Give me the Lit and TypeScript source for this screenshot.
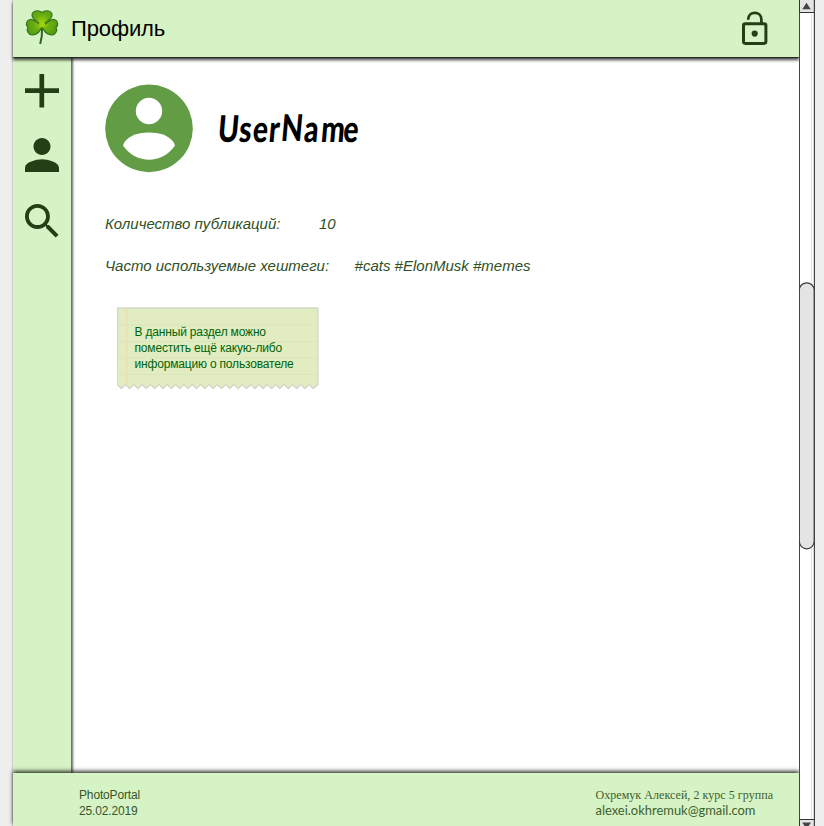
import { LitElement, html, css, svg } from "lit";
import { customElement } from "lit/decorators.js";

const teeth = Array.from({ length: 24 }, (_, i) => {
  const x = 200.5 - i * 8.35;
  return `L${(x - 4.17).toFixed(1)} 81.5L${(x - 8.35).toFixed(1)} 77.5`;
}).join("");

@customElement("profile-note")
class ProfileNote extends LitElement {
  static styles = css`
    :host { display: grid; width: 203px; height: 84px; }
    svg, .text { grid-area: 1 / 1; }
    .text {
      padding: 17px 0 0 17.5px;
      font: 12px/16px "Liberation Sans", Arial, sans-serif;
      color: #00640a;
      white-space: nowrap;
      letter-spacing: -0.18px;
      z-index: 1;
    }
  `;
  render() {
    return html`
      <svg width="203" height="84" viewBox="0 0 203 84">
        <path d="M.7 1H201V77.5${teeth}Z" fill="#e1ecc1" stroke="#d3d7c9" stroke-width="1.3" />
        ${[18, 34.5, 51, 67.5].map((y) => svg`<path d="M1.5 ${y}H200" stroke="#d9e5bd" stroke-width="1" />`)}
        <path d="M9.5 1.5V78" stroke="#eddfb5" stroke-width="1.3" />
      </svg>
      <div class="text">
        <div>В данный раздел можно</div>
        <div>поместить ещё какую-либо</div>
        <div>информацию о пользователе</div>
      </div>
    `;
  }
}

@customElement("page-scrollbar")
class PageScrollbar extends LitElement {
  static styles = css`
    :host { display: block; width: 17px; height: 826px; z-index: 2; }
    svg { display: block; }
  `;
  render() {
    return html`
      <svg width="17" height="826" viewBox="0 0 17 826">
        <rect width="16" height="826" fill="#fff" />
        <path d="M12.5 0V826" stroke="#e5e5e5" />
        <path d="M.4 0V826M15.4 0V826" stroke="#454545" stroke-width="1.2" />
        <rect x=".5" y="-3" width="14.8" height="15.5" fill="#e4e4e4" stroke="#333" />
        <path d="M3.3 9.3L7.5 2.7L11.8 9.3Z" fill="#444" />
        <rect x=".3" y="282.8" width="14.9" height="266" rx="7.45" fill="#e4e4e4" stroke="#3a3a3a" stroke-width="1.2" />
        <rect x=".5" y="819.5" width="14.8" height="12" fill="#e4e4e4" stroke="#333" />
        <path d="M3.2 822.5H12L7.6 829Z" fill="#444" />
      </svg>
    `;
  }
}

@customElement("app-root")
class AppRoot extends LitElement {
  static styles = css`
    :host {
      display: grid;
      grid-template-columns: 786px 17px;
      padding-left: 13px;
      height: 826px;
      box-sizing: border-box;
      overflow: hidden;
      background: #eee;
      font-family: "Liberation Sans", Arial, sans-serif;
    }
    svg { display: block; }
    .page {
      display: grid;
      grid-template-rows: 57px 716px 53px;
      background: #fff;
      box-shadow: -1px 0 1px #d0d0d0;
    }
    header, footer { display: flex; background: #d6f3c5; z-index: 1; box-sizing: border-box; }
    header { padding: 0 31px 0 12px; box-shadow: 0 3px 3px #000000c0, 0 1px 0 #7c8f72; }
    header h1 { margin: 15px auto 0 11px; font-size: 22px; line-height: 27px; font-weight: 400; letter-spacing: -0.12px; }
    .clover { margin-top: 9px; }
    .lock { margin-top: 11px; }
    .body { display: grid; grid-template-columns: 58px 1fr; }
    nav { display: flex; flex-direction: column; background: #d6f3c5; box-shadow: 2px 0 2px #00000099; color: #243e16; }
    nav svg { margin-left: 12px; }
    .plus { margin-top: 17px; }
    .person { margin-top: 30px; }
    .search { margin-top: 32px; }
    main { padding: 27px 0 0 34px; color: #2f4f24; }
    .identity { display: flex; gap: 24px; height: 90px; }
    .name { font: 900 37px "Lato", sans-serif; fill: #000; }
    .facts { display: grid; gap: 24px; margin-top: 41px; font-size: 15px; line-height: 18px; font-style: italic; white-space: pre; }
    .fact { display: flex; }
    .count .label { width: 214px; }
    .tags .label { width: 249.6px; }
    profile-note { margin: 32px 0 0 12px; }
    footer { padding: 14px 26px 0 66px; justify-content: space-between; font-size: 12px; line-height: 16px; letter-spacing: -0.15px; color: #375527; box-shadow: 0 -2px 4px #000000c8; }
    .author { width: 178px; letter-spacing: 0; }
    .author svg { overflow: visible; fill: #40602d; }
    .mail { font: 12.5px "Lato", sans-serif; }
    .who { font: 12px "Liberation Serif", serif; }
  `;
  render() {
    return html`
      <div class="page">
        <header>
          <svg class="clover" width="35" height="37" viewBox="0 0 35 37">
            <defs>
              <radialGradient id="leaf" gradientUnits="userSpaceOnUse" cx="17" cy="14" r="18">
                <stop offset="0" stop-color="#a5d90b" />
                <stop offset=".45" stop-color="#69ae12" />
                <stop offset="1" stop-color="#4c9a10" />
              </radialGradient>
            </defs>
            <path d="M17 18Q17.5 27 15.2 35" fill="none" stroke="#2f6425" stroke-width="2" />
            <g fill="url(#leaf)" stroke="#39751b" stroke-width="1.2" stroke-linejoin="round">
              <path d="M17 17C15 13 7 11 7 6.2C7.2 2 13 .2 17 3.5C21 .2 27 2 27 6.2C27 11 19 13 17 17Z" />
              <path d="M17 17C12 15 9 9 4.8 10.5C1 11.8 .3 16.5 3.2 18.4C.8 21 3.7 26.5 8 25.8C12.5 25.5 15.5 22 17 17Z" />
              <path d="M17 17C22 15 25 9 29.5 10.5C33 11.8 33.8 16.5 30.8 18.4C33 21 30.5 26.5 26.3 25.8C21.8 25.5 18.5 22 17 17Z" />
            </g>
            <circle cx="17" cy="15.5" r="3" fill="#9bd00d" />
          </svg>
          <h1>Профиль</h1>
          <svg class="lock" width="26" height="35" viewBox="0 0 26 35" fill="none" stroke="#243e16">
            <rect x="1.5" y="12.8" width="22.4" height="19.6" rx="1.8" stroke-width="3" />
            <path d="M6.2 8.8V8.5C6.2 -.3 19.4 -.3 19.4 8.5V12" stroke-width="2.7" />
            <circle cx="12.7" cy="22.6" r="3.1" fill="#243e16" stroke="none" />
          </svg>
        </header>
        <div class="body">
          <nav>
            <svg class="plus" width="34" height="34" viewBox="0 0 34 34"><path d="M0 16.7H34M16.8 0V33.5" stroke="currentColor" stroke-width="4.7" /></svg>
            <svg class="person" width="34" height="34" viewBox="4 4 16 16" fill="currentColor"><path d="M12 12c2.21 0 4-1.79 4-4s-1.79-4-4-4-4 1.79-4 4 1.79 4 4 4zm0 2c-2.67 0-8 1.34-8 4v2h16v-2c0-2.66-5.33-4-8-4z" /></svg>
            <svg class="search" width="33.5" height="33.5" viewBox="3 3 17.49 17.49" fill="currentColor"><path d="M15.5 14h-.79l-.28-.27C15.41 12.59 16 11.11 16 9.5 16 5.91 13.09 3 9.5 3S3 5.91 3 9.5 5.91 16 9.5 16c1.61 0 3.09-.59 4.23-1.57l.27.28v.79l5 4.99L20.49 19l-4.99-5zm-6 0C7.01 14 5 11.99 5 9.5S7.01 5 9.5 5 14 7.01 14 9.5 11.99 14 9.5 14z" /></svg>
          </nav>
          <main>
            <div class="identity">
              <svg width="88" height="89" viewBox="0 0 88 89">
                <circle cx="44" cy="44.4" r="43.8" fill="#629d45" />
                <circle cx="44" cy="27" r="13.2" fill="#fff" />
                <path d="M18 61.5C22 44 66 44 70 61.5C57 80.5 31 80.5 18 61.5Z" fill="#fff" />
              </svg>
              <svg width="150" height="89" viewBox="0 0 150 89">
                <g class="name" transform="translate(0 58) skewX(-5) scale(.76 1)">
                  <text x="0 28 46 67 83 113.5 136 165" y="0 0 0 0 -1 0 0 0">UserName</text>
                </g>
              </svg>
            </div>
            <div class="facts">
              <div class="fact count"><span class="label">Количество публикаций:</span><span>10</span></div>
              <div class="fact tags"><span class="label">Часто используемые хештеги:</span><span>#cats #ElonMusk #memes</span></div>
            </div>
            <profile-note></profile-note>
          </main>
        </div>
        <footer>
          <div><div>PhotoPortal</div><div>25.02.2019</div></div>
          <div class="author">
            <svg width="178" height="34" viewBox="0 0 178 34">
              <text class="who" x=".5" y="12" textLength="177.5">Охремук Алексей, 2 курс 5 группа</text>
              <text class="mail" x=".5" y="28" textLength="160" lengthAdjust="spacingAndGlyphs">alexei.okhremuk@gmail.com</text>
            </svg>
          </div>
        </footer>
      </div>
      <page-scrollbar></page-scrollbar>
    `;
  }
}
